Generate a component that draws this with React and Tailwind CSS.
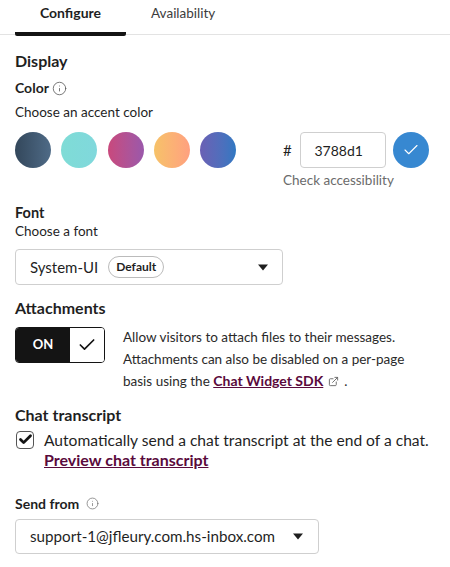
import { Check, ExternalLink, Info } from 'lucide-react';

const swatches = [
  'bg-gradient-to-r from-[#33475b] to-[#4f6b87]',
  'bg-gradient-to-r from-[#7fdcd6] to-[#80d8dc]',
  'bg-gradient-to-r from-[#c9487c] to-[#9a58ab]',
  'bg-gradient-to-r from-[#f6c268] to-[#ffa07f]',
  'bg-gradient-to-r from-[#6a60b4] to-[#2f78c2]',
];

function Caret() {
  return (
    <svg width="12" height="7" viewBox="0 0 12 7" className="shrink-0">
      <path d="M1 0.5h10L6 6.5z" fill="#1f1f1f" />
    </svg>
  );
}

export default function App() {
  return (
    <div className="h-[567px] w-[450px] overflow-hidden bg-white font-['Lato','Noto_Sans',sans-serif] text-[13.5px] text-[#1f1f1f]">
      {/* Tabs */}
      <div className="flex h-[35px] border-b border-[#e3e3e3] pl-[15px]">
        <div className="h-[36px] w-[111px] rounded-[2px] border-b-4 border-[#141414] pt-[4px] text-center text-[14px] font-bold leading-[18px]">Configure</div>
        <div className="ml-[25px] pt-[4px] leading-[18px] text-[#3c3c3c]">Availability</div>
      </div>

      <div className="px-[15px]">
        <h2 className="mt-[16px] text-[16px] font-bold leading-[20px]">Display</h2>
        <div className="mt-[8px] flex h-[18px] items-center gap-[3px] text-[14px] font-bold leading-[18px]">
          Color <Info size={15} strokeWidth={1.25} color="#555" />
        </div>
        <p className="mt-[6px] leading-[18px]">Choose an accent color</p>

        {/* Colour row */}
        <div className="mt-[11px] flex items-center">
          <div className="flex gap-[10.25px]">
            {swatches.map((s) => (
              <div key={s} className={`h-[36px] w-[36px] rounded-full ${s}`} />
            ))}
          </div>
          <span className="ml-[47px] text-[15px]">#</span>
          <div className="ml-[8px] flex h-[36px] w-[86px] items-center justify-center rounded-[4px] border border-[#cfcfcf] pr-[8px] text-[14px]">3788d1</div>
          <div className="ml-[7px] flex h-[36px] w-[36px] items-center justify-center rounded-full bg-[#3788d1]">
            <Check size={18} strokeWidth={1.5} color="#fff" />
          </div>
        </div>
        <p className="ml-[268px] mt-[3px] leading-[18px] text-[#6b6b6b]">Check accessibility</p>

        <div className="mt-[15px] text-[14.5px] font-bold leading-[18px]">Font</div>
        <p className="leading-[18px]">Choose a font</p>
        <div className="mt-[9px] flex h-[36px] w-[268px] items-center rounded-[4px] border border-[#cfcfcf] pl-[14px] pr-[13px]">
          <span className="text-[15px]">System-UI</span>
          <span className="ml-[10px] flex h-[22px] items-center rounded-full border border-[#bbb] px-[7px] text-[12px] font-bold">Default</span>
          <span className="ml-auto"><Caret /></span>
        </div>

        <h3 className="mt-[13px] text-[16px] font-bold leading-[20px]">Attachments</h3>
        <div className="mt-[9px] flex">
          <div className="flex h-[36px] w-[90px] shrink-0 overflow-hidden rounded-[4px] border border-[#141414]">
            <div className="flex w-[54px] items-center justify-center bg-[#141414] text-[13px] font-bold text-white">ON</div>
            <div className="flex flex-1 items-center justify-center bg-white"><Check size={20} strokeWidth={2} color="#141414" /></div>
          </div>
          <p className="ml-[18px] whitespace-nowrap leading-[21.5px] text-[#2a2a2a]">
            Allow visitors to attach files to their messages.<br />
            Attachments can also be disabled on a per-page<br />
            basis using the <a className="text-[14px] font-bold text-[#5a0a3c] underline">Chat Widget SDK</a>
            <ExternalLink size={11} className="mx-[5px] inline align-[-1px] text-[#666]" />.
          </p>
        </div>

        <h3 className="mt-[12px] text-[16px] font-bold leading-[20px]">Chat transcript</h3>
        <div className="mt-[5px] flex">
          <div className="ml-[1px] mt-[1px] flex h-[18px] w-[18px] shrink-0 items-center justify-center rounded-[4px] border border-[#555]">
            <Check size={15} strokeWidth={4.5} color="#141414" />
          </div>
          <div className="ml-[10px]">
            <p className="whitespace-nowrap text-[15.6px] leading-[20px]">Automatically send a chat transcript at the end of a chat.</p>
            <a className="text-[16px] font-bold leading-[20px] text-[#5a0a3c] underline">Preview chat transcript</a>
          </div>
        </div>

        <div className="mt-[24px] flex h-[18px] items-center gap-[7px] text-[14px] font-bold">
          Send from <Info size={13} strokeWidth={1.25} color="#666" />
        </div>
        <div className="mt-[6px] flex h-[35px] w-[304px] items-center rounded-[4px] border border-[#cfcfcf] pl-[14px] pr-[14px]">
          <span className="whitespace-nowrap text-[15.2px]">support-1@jfleury.com.hs-inbox.com</span>
          <span className="ml-auto"><Caret /></span>
        </div>
      </div>
    </div>
  );
}
